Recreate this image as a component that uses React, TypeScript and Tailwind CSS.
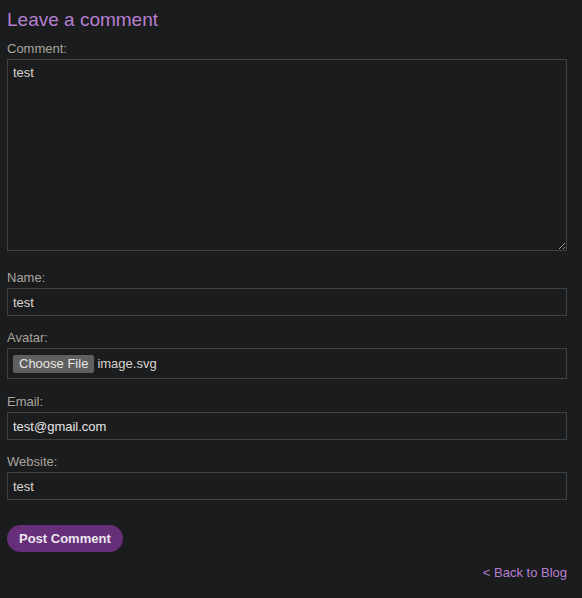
export default function App() {
  const label = "block text-[13px] leading-[15px] text-[#aaa59d]";
  const input =
    "block w-full h-[28px] border border-[#3f4244] bg-transparent px-[5px] text-[13px] text-[#d8d4cf] outline-none";

  return (
    <div
      className="min-h-[598px] bg-[#1b1c1e] pl-[7px] pr-[15px] pt-[8px]"
      style={{ fontFamily: '"Liberation Sans", Arial, sans-serif' }}
    >
      <h2 className="text-[19px] leading-[24px] text-[#b67fcf]">Leave a comment</h2>

      <form className="mt-[9px]" onSubmit={(e) => e.preventDefault()}>
        <label className={label}>Comment:</label>
        <textarea
          defaultValue="test"
          className="mt-[3px] block h-[192px] w-full resize-y border border-[#3f4244] bg-transparent px-[5px] py-[5px] text-[13px] leading-[15px] text-[#d8d4cf] outline-none [color-scheme:dark]"
        />

        <label className={`${label} mt-[19px]`}>Name:</label>
        <input defaultValue="test" className={`${input} mt-[3px]`} />

        <label className={`${label} mt-[14px]`}>Avatar:</label>
        <div className="mt-[3px] flex h-[31px] items-center gap-[3px] border border-[#3f4244] px-[5px]">
          <span className="rounded-[2px] bg-[#5f5f5f] px-[6px] text-[13px] leading-[18px] text-[#e8e6e3]">
            Choose File
          </span>
          <span className="text-[13px] text-[#d8d4cf]">image.svg</span>
        </div>

        <label className={`${label} mt-[15px]`}>Email:</label>
        <input
          defaultValue="test@gmail.com"
          className={`${input} mt-[3px] h-[27px] bg-[#2a3344] text-[#e8e6e3]`}
        />

        <label className={`${label} mt-[14px]`}>Website:</label>
        <input defaultValue="test" className={`${input} mt-[3px] h-[27px]`} />

        <button
          type="submit"
          className="mt-[25px] h-[27px] rounded-full bg-[#672f7a] px-[12px] text-[13px] font-bold text-[#ece8f0]"
        >
          Post Comment
        </button>
      </form>

      <div className="mt-[8px] text-right">
        <a href="#" className="text-[13px] text-[#b67fcf]">
          &lt; Back to Blog
        </a>
      </div>
    </div>
  );
}
